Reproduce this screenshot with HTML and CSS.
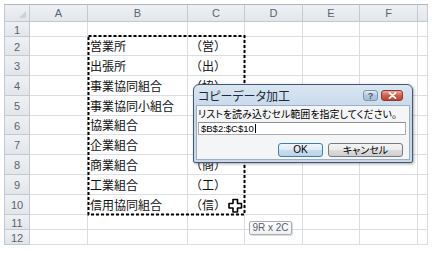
FILE: index.html
```html
<!DOCTYPE html>
<html lang="ja">

<head>
    <meta charset="UTF-8">
    <title>コピーデータ加工</title>
    <link rel="stylesheet" href="styles.css">
</head>

<body>
    <div class="sheet">
        <!-- Column headers -->
        <div class="hd corner"></div>
        <div class="hd col">A</div>
        <div class="hd col">B</div>
        <div class="hd col">C</div>
        <div class="hd col">D</div>
        <div class="hd col">E</div>
        <div class="hd col">F</div>
        <div class="hd col"></div>

        <div class="hd num">1</div>
        <div class="c"></div><div class="c"></div><div class="c"></div><div class="c"></div><div class="c"></div><div class="c"></div><div class="c"></div>

        <div class="hd num">2</div>
        <div class="c"></div><div class="c">営業所</div><div class="c">（営）</div><div class="c"></div><div class="c"></div><div class="c"></div><div class="c"></div>

        <div class="hd num">3</div>
        <div class="c"></div><div class="c">出張所</div><div class="c">（出）</div><div class="c"></div><div class="c"></div><div class="c"></div><div class="c"></div>

        <div class="hd num">4</div>
        <div class="c"></div><div class="c">事業協同組合</div><div class="c">（協）</div><div class="c"></div><div class="c"></div><div class="c"></div><div class="c"></div>

        <div class="hd num">5</div>
        <div class="c"></div><div class="c">事業協同小組合</div><div class="c"></div><div class="c"></div><div class="c"></div><div class="c"></div><div class="c"></div>

        <div class="hd num">6</div>
        <div class="c"></div><div class="c">協業組合</div><div class="c"></div><div class="c"></div><div class="c"></div><div class="c"></div><div class="c"></div>

        <div class="hd num">7</div>
        <div class="c"></div><div class="c">企業組合</div><div class="c"></div><div class="c"></div><div class="c"></div><div class="c"></div><div class="c"></div>

        <div class="hd num">8</div>
        <div class="c"></div><div class="c">商業組合</div><div class="c">（商）</div><div class="c"></div><div class="c"></div><div class="c"></div><div class="c"></div>

        <div class="hd num">9</div>
        <div class="c"></div><div class="c">工業組合</div><div class="c">（工）</div><div class="c"></div><div class="c"></div><div class="c"></div><div class="c"></div>

        <div class="hd num">10</div>
        <div class="c"></div><div class="c">信用協同組合</div><div class="c">（信）</div><div class="c"></div><div class="c"></div><div class="c"></div><div class="c"></div>

        <div class="hd num">11</div>
        <div class="c"></div><div class="c"></div><div class="c"></div><div class="c"></div><div class="c"></div><div class="c"></div><div class="c"></div>

        <div class="hd num">12</div>
        <div class="c"></div><div class="c"></div><div class="c"></div><div class="c"></div><div class="c"></div><div class="c"></div><div class="c"></div>
    </div>

    <!-- Copy selection (marching ants) -->
    <svg class="ants" width="160" height="182" viewBox="0 0 160 182">
        <rect x="1.5" y="1" width="156" height="178.5" fill="none" stroke="#000" stroke-width="2" stroke-dasharray="3 2"/>
    </svg>

    <!-- Fill cursor -->
    <svg class="cursor" width="15" height="15" viewBox="0 0 15 15">
        <path d="M5 1.5h4.5v4h4v4.5h-4v4h-4.5v-4h-4v-4.5h4z" fill="#fff" stroke="#000" stroke-width="1.6" stroke-linejoin="round"/>
    </svg>

    <div class="tip">9R x 2C</div>

    <!-- Dialog -->
    <div class="dialog">
        <div class="dlg-title">
            <span>コピーデータ加工</span>
            <div class="dlg-btns">
                <span class="tbtn help">?</span>
                <span class="tbtn close">
                    <svg width="9" height="7" viewBox="0 0 9 7">
                        <path d="M1.5 0.8l6 5.4M7.5 0.8l-6 5.4" stroke="#fff" stroke-width="1.8" stroke-linecap="round"/>
                    </svg>
                </span>
            </div>
        </div>
        <div class="dlg-body">
            <div class="dlg-label">リストを読み込むセル範囲を指定してください。</div>
            <div class="dlg-input">$B$2:$C$10<span class="caret"></span></div>
            <div class="dlg-actions">
                <button class="btn default">OK</button>
                <button class="btn">キャンセル</button>
            </div>
        </div>
    </div>
</body>

</html>
```

FILE: styles.css
```css
/* General */
body {
    margin: 0;
    background: #fff;
    font-family: "Noto Sans CJK JP", sans-serif;
    position: relative;
    width: 432px;
    height: 254px;
    overflow: hidden;
}

/* Sheet grid */
.sheet {
    margin: 4px 0 0 4px;
    display: grid;
    grid-template-columns: 26px 58px 100px 57px 58px 57px 58px 10px;
    grid-template-rows: 18px 15px 19px 20px 20px 20px 19px 20px 20px 20px 20px 15px 15px;
    width: 424px;
}

.c,
.hd {
    box-sizing: border-box;
    border-right: 1px solid #dadde2;
    border-bottom: 1px solid #dadde2;
    display: flex;
    align-items: center;
    overflow: hidden;
    white-space: nowrap;
}

.c {
    font-size: 12px;
    color: #111;
    padding: 0 0 1px 2px;
}

.hd {
    background: linear-gradient(#eef1f4, #e2e6eb);
    border-color: #c3c9d1;
    font-family: "Liberation Sans", Arial, sans-serif;
    font-size: 11px;
    color: #5a6470;
    justify-content: center;
}

.col {
    border-top: 1px solid #aeb6bf;
}

.corner {
    border-top: 1px solid #aeb6bf;
    border-left: 1px solid #c3c9d1;
    position: relative;
}

.corner::after {
    content: '';
    position: absolute;
    right: 3px;
    bottom: 3px;
    border-left: 7px solid transparent;
    border-bottom: 7px solid #cdd2d8;
}

.num {
    border-left: 1px solid #c3c9d1;
    padding-top: 1px;
}

/* Overlays */
.ants {
    position: absolute;
    left: 87px;
    top: 35px;
}

.cursor {
    position: absolute;
    left: 228px;
    top: 198px;
}

.tip {
    position: absolute;
    left: 249px;
    top: 221px;
    width: 43px;
    height: 14px;
    box-sizing: border-box;
    border: 1px solid #a9adb3;
    border-radius: 2px;
    background: linear-gradient(#ffffff, #eef0f3);
    box-shadow: 1px 1px 1px rgba(0, 0, 0, 0.15);
    font-family: "Liberation Sans", Arial, sans-serif;
    font-size: 10px;
    line-height: 12px;
    color: #575d66;
    text-align: center;
}

/* Dialog */
.dialog {
    position: absolute;
    left: 193px;
    top: 84px;
    width: 220px;
    box-sizing: border-box;
    border: 1px solid #44596e;
    border-radius: 6px 6px 2px 2px;
    background: linear-gradient(#d9e5f2, #c3d5e9 40%, #c9d9eb);
    box-shadow: 1px 1px 3px rgba(0, 0, 0, 0.35);
}

.dlg-title {
    height: 20px;
    display: flex;
    align-items: center;
    justify-content: space-between;
    padding: 0 9px 0 4px;
    font-size: 12px;
    color: #1c2a3a;
    font-feature-settings: "palt";
}

.dlg-btns {
    display: flex;
    gap: 3px;
    padding-top: 1px;
}

.tbtn {
    height: 11px;
    box-sizing: border-box;
    border: 1px solid #7f93a9;
    border-radius: 3px;
    display: flex;
    align-items: center;
    justify-content: center;
}

.help {
    width: 15px;
    background: linear-gradient(#e4edf6, #b4c7dc 50%, #a9bed6);
    font-family: "Liberation Sans", Arial, sans-serif;
    font-size: 9px;
    font-weight: bold;
    color: #3f5872;
}

.close {
    width: 22px;
    border-color: #8a3a2e;
    background: linear-gradient(#eaa99b, #d0604a 50%, #c2432c);
}

.dlg-body {
    margin: 0 2px 2px 2px;
    background: #f4f5f6;
    border: 1px solid #9cb0c5;
    padding: 2px 3px 2px 1px;
}

.dlg-label {
    font-size: 10px;
    line-height: 12px;
    color: #000;
    font-feature-settings: "palt";
    white-space: nowrap;
}

.dlg-input {
    margin-top: 2px;
    height: 13px;
    box-sizing: border-box;
    border: 1px solid #abadb3;
    border-top-color: #8e9096;
    background: #fff;
    font-family: "Liberation Sans", Arial, sans-serif;
    font-size: 9.5px;
    line-height: 11px;
    padding-left: 2px;
    display: flex;
    align-items: center;
}

.caret {
    width: 1px;
    height: 9px;
    background: #000;
    margin-left: 1px;
}

.dlg-actions {
    margin-top: 8px;
    display: flex;
    justify-content: flex-end;
    gap: 5px;
    padding-right: 3px;
}

.btn {
    height: 14px;
    box-sizing: border-box;
    padding: 0;
    border: 1px solid #7a7a7a;
    border-radius: 3px;
    background: linear-gradient(#f4f4f4, #ebebeb 50%, #dcdcdc 51%, #cfcfcf);
    font-family: "Noto Sans CJK JP", sans-serif;
    font-size: 10px;
    line-height: 12px;
    color: #000;
    width: 75px;
    font-feature-settings: "palt";
}

.btn.default {
    width: 45px;
    border-color: #3c7fb1;
    background: linear-gradient(#f0f6fb, #dde9f4 50%, #cbdcec 51%, #bcd3e8);
    font-family: "Liberation Sans", Arial, sans-serif;
}
```
